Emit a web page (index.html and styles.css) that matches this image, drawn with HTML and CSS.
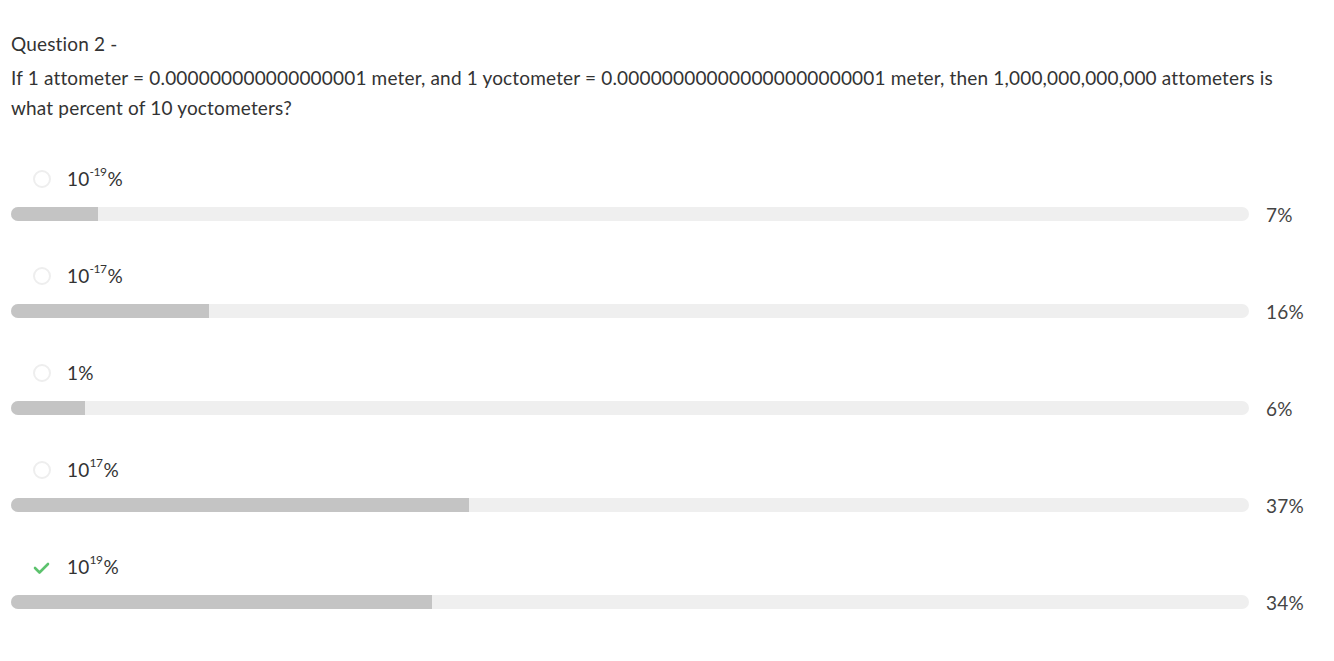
FILE: index.html
```html
<!DOCTYPE html>
<html>
<head>
<meta charset="utf-8">
<link rel="stylesheet" href="styles.css">
</head>
<body>
<div class="page">
  <div class="q-title">Question 2 -</div>
  <div class="q-text">If 1 attometer = 0.000000000000000001 meter, and 1 yoctometer = 0.000000000000000000000001 meter, then 1,000,000,000,000 attometers is what percent of 10 yoctometers?</div>
  <div class="options">
    <div class="option">
      <div class="label"><span class="radio"></span><span>10<sup>-19</sup>%</span></div>
      <div class="bar-row"><div class="track"><div class="fill" style="width:7%"></div></div><span class="pct">7%</span></div>
    </div>
    <div class="option">
      <div class="label"><span class="radio"></span><span>10<sup>-17</sup>%</span></div>
      <div class="bar-row"><div class="track"><div class="fill" style="width:16%"></div></div><span class="pct">16%</span></div>
    </div>
    <div class="option">
      <div class="label"><span class="radio"></span><span>1%</span></div>
      <div class="bar-row"><div class="track"><div class="fill" style="width:6%"></div></div><span class="pct">6%</span></div>
    </div>
    <div class="option">
      <div class="label"><span class="radio"></span><span>10<sup>17</sup>%</span></div>
      <div class="bar-row"><div class="track"><div class="fill" style="width:37%"></div></div><span class="pct">37%</span></div>
    </div>
    <div class="option">
      <div class="label"><span class="check"><svg width="17" height="14" viewBox="0 0 17 14"><path d="M2 7 L6.5 11.5 L15 3" fill="none" stroke="#5cc26d" stroke-width="2.6" stroke-linecap="round" stroke-linejoin="round"/></svg></span><span>10<sup>19</sup>%</span></div>
      <div class="bar-row"><div class="track"><div class="fill" style="width:34%"></div></div><span class="pct">34%</span></div>
    </div>
  </div>
</div>
</body>
</html>
```
FILE: styles.css
```css
html, body {
  margin: 0;
  padding: 0;
  background: #fff;
}
body {
  font-family: Lato, "Liberation Sans", sans-serif;
  color: #333;
  font-size: 19px;
  letter-spacing: 0.17px;
}
.page {
  padding: 31px 11px 0 11px;
}
.q-title {
  line-height: 26px;
}
.q-text {
  margin-top: 6px;
  line-height: 30px;
  width: 1290px;
}
.options {
  margin-top: 43px;
  display: flex;
  flex-direction: column;
  gap: 38px;
}
.option {
  display: flex;
  flex-direction: column;
}
.label {
  display: flex;
  align-items: center;
  height: 24px;
  gap: 16px;
  padding-left: 22px;
}
.radio {
  width: 14px;
  height: 14px;
  border: 2px solid #eeeeee;
  border-radius: 50%;
  display: block;
  margin-top: 2px;
}
.check {
  width: 18px;
  height: 18px;
  display: flex;
  align-items: center;
  margin-top: 4px;
}
.label sup {
  font-size: 12px;
  line-height: 0;
  position: relative;
  top: -2px;
  letter-spacing: -0.4px;
  margin-right: 1px;
}
.bar-row {
  display: flex;
  align-items: center;
  margin-top: 13px;
  height: 22px;
}
.track {
  width: 1238px;
  height: 14px;
  background: #efefef;
  border-radius: 7px;
  overflow: hidden;
}
.fill {
  height: 100%;
  background: #c4c4c4;
}
.pct {
  margin-left: 17px;
  color: #444;
}
```
